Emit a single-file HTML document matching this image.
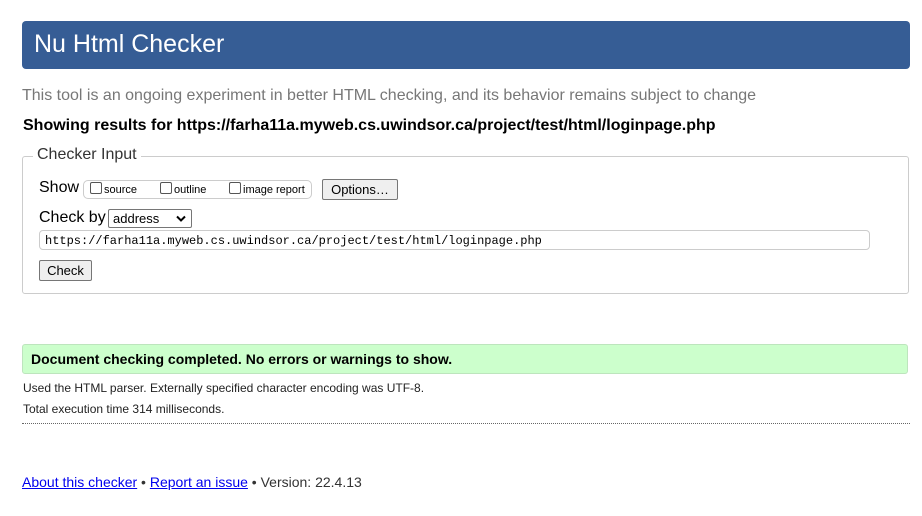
<!DOCTYPE html>
<html><head><meta charset="utf-8"><style>
body{margin:0;width:922px;height:516px;background:#fff;font-family:"Liberation Sans",Arial,sans-serif;position:relative;overflow:hidden;color:#000}
.a{position:absolute;white-space:nowrap}
#hd{left:22px;top:21px;width:888px;height:48px;background:#365d95;border-radius:4px}
#hd span{position:absolute;left:12px;top:9px;color:#fff;font-size:25px}
#fs{left:22px;top:156px;width:885px;height:136px;border:1px solid #ccc;border-radius:3px}
.cb{display:inline-block;width:10px;height:10px;border:1px solid #555;border-radius:2px;vertical-align:-1px;margin-right:2px}
.btn{position:absolute;background:#efefef;border:1px solid #767676;border-radius:2px;font-size:13px;text-align:center;box-sizing:border-box}
a{color:#0000ee}
</style></head><body>
<div id="hd" class="a"><span>Nu Html Checker</span></div>
<div class="a" style="left:22px;top:87px;font-size:16px;color:#777">This tool is an ongoing experiment in better HTML checking, and its behavior remains subject to change</div>
<div class="a" style="left:23px;top:117px;font-size:16px;font-weight:bold">Showing results for https://farha11a.myweb.cs.uwindsor.ca/project/test/html/loginpage.php</div>
<div id="fs" class="a"></div>
<div class="a" style="left:33px;top:146px;background:#fff;padding:0 4px;font-size:16px;color:#333">Checker Input</div>
<div class="a" style="left:39px;top:179px;font-size:16px">Show</div>
<div class="a" style="left:83px;top:180px;width:227px;height:17px;border:1px solid #ccc;border-radius:5px;font-size:11px;line-height:17px">
<span style="position:absolute;left:6px;top:1px"><span class="cb"></span>source</span>
<span style="position:absolute;left:76px;top:1px"><span class="cb"></span>outline</span>
<span style="position:absolute;left:145px;top:1px"><span class="cb"></span>image report</span></div>
<div class="btn" style="left:322px;top:179px;width:76px;height:21px;line-height:19px">Options…</div>
<div class="a" style="left:39px;top:209px;font-size:16px">Check by</div>
<div class="a" style="left:108px;top:209px;width:84px;border:1px solid #767676;border-radius:2px;font-size:13px;line-height:18px;box-sizing:border-box;padding-left:4px;height:19px">address<svg style="position:absolute;right:5px;top:5px" width="10" height="7" viewBox="0 0 10 7"><path d="M1 1.5L5 5.5L9 1.5" fill="none" stroke="#000" stroke-width="2"/></svg></div>
<div class="a" style="left:39px;top:230px;width:831px;height:20px;border:1px solid #ccc;border-radius:4px;font-family:'Liberation Mono',monospace;font-size:12px;line-height:20px;padding-left:5px;box-sizing:border-box">https://farha11a.myweb.cs.uwindsor.ca/project/test/html/loginpage.php</div>
<div class="btn" style="left:39px;top:260px;width:53px;height:21px;line-height:19px">Check</div>
<div class="a" style="left:22px;top:344px;width:886px;background:#ccffcc;border:1px solid #bde5bd;border-radius:3px;font-size:14px;font-weight:bold;line-height:28px;padding-left:8px;box-sizing:border-box;height:30px">Document checking completed. No errors or warnings to show.</div>
<div class="a" style="left:23px;top:381px;font-size:12px;color:#222">Used the HTML parser. Externally specified character encoding was UTF-8.</div>
<div class="a" style="left:23px;top:402px;font-size:12px;color:#222">Total execution time 314 milliseconds.</div>
<div class="a" style="left:22px;top:423px;width:888px;border-top:1px dotted #666"></div>
<div class="a" style="left:22px;top:474px;font-size:14px;color:#333"><a href="#">About this checker</a> • <a href="#">Report an issue</a> • Version: 22.4.13</div>
</body></html>
